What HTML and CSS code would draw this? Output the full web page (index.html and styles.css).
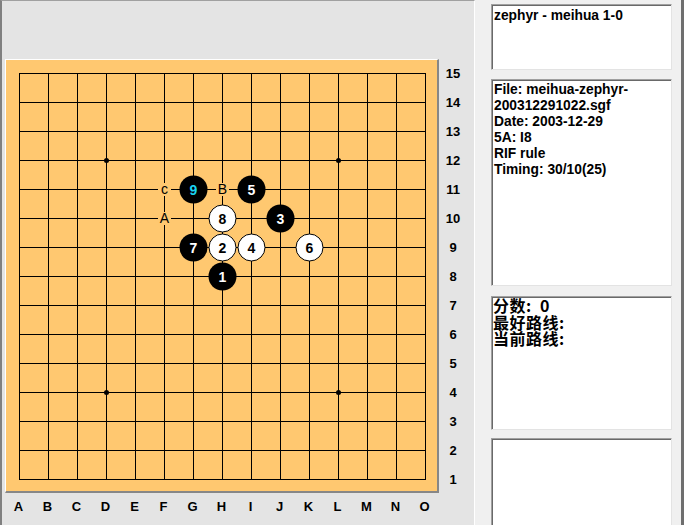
FILE: index.html
```html
<!DOCTYPE html>
<html>
<head>
<meta charset="utf-8">
<link rel="stylesheet" href="styles.css">
</head>
<body>
<div class="app">
  <div class="left">
    <div class="board-area">
      <div class="board">
        <svg class="grid" width="431" height="431" viewBox="0 0 431 431">
          <path class="lines" d="M13.5 13V420M42.5 13V420M71.5 13V420M100.5 13V420M129.5 13V420M158.5 13V420M187.5 13V420M216.5 13V420M245.5 13V420M274.5 13V420M303.5 13V420M332.5 13V420M361.5 13V420M390.5 13V420M419.5 13V420M13 13.5H420M13 42.5H420M13 71.5H420M13 100.5H420M13 129.5H420M13 158.5H420M13 187.5H420M13 216.5H420M13 245.5H420M13 274.5H420M13 303.5H420M13 332.5H420M13 361.5H420M13 390.5H420M13 419.5H420"/>
          <circle class="star" cx="100.5" cy="100.5" r="2.5"/>
          <circle class="star" cx="332.5" cy="100.5" r="2.5"/>
          <circle class="star" cx="100.5" cy="332.5" r="2.5"/>
          <circle class="star" cx="332.5" cy="332.5" r="2.5"/>

          <rect class="mark-bg" x="152" y="123" width="13" height="13"/>
          <text class="mark" x="158.5" y="134">c</text>
          <rect class="mark-bg" x="210" y="123" width="13" height="13"/>
          <text class="mark" x="216.5" y="134">B</text>
          <rect class="mark-bg" x="152" y="152" width="13" height="13"/>
          <text class="mark" x="158.5" y="163">A</text>

          <circle class="black" cx="216.5" cy="216.5" r="14"/>
          <text class="num num-w" x="216.5" y="221.5">1</text>
          <circle class="white" cx="216.5" cy="187.5" r="13.5"/>
          <text class="num num-b" x="216.5" y="192.5">2</text>
          <circle class="black" cx="274.5" cy="158.5" r="14"/>
          <text class="num num-w" x="274.5" y="163.5">3</text>
          <circle class="white" cx="245.5" cy="187.5" r="13.5"/>
          <text class="num num-b" x="245.5" y="192.5">4</text>
          <circle class="black" cx="245.5" cy="129.5" r="14"/>
          <text class="num num-w" x="245.5" y="134.5">5</text>
          <circle class="white" cx="303.5" cy="187.5" r="13.5"/>
          <text class="num num-b" x="303.5" y="192.5">6</text>
          <circle class="black" cx="187.5" cy="187.5" r="14"/>
          <text class="num num-w" x="187.5" y="192.5">7</text>
          <circle class="white" cx="216.5" cy="158.5" r="13.5"/>
          <text class="num num-b" x="216.5" y="163.5">8</text>
          <circle class="black" cx="187.5" cy="129.5" r="14"/>
          <text class="num num-last" x="187.5" y="134.5">9</text>
        </svg>
      </div>
      <div class="rows">
        <span>15</span><span>14</span><span>13</span><span>12</span><span>11</span><span>10</span><span>9</span><span>8</span><span>7</span><span>6</span><span>5</span><span>4</span><span>3</span><span>2</span><span>1</span>
      </div>
      <div class="cols">
        <span>A</span><span>B</span><span>C</span><span>D</span><span>E</span><span>F</span><span>G</span><span>H</span><span>I</span><span>J</span><span>K</span><span>L</span><span>M</span><span>N</span><span>O</span>
      </div>
    </div>
  </div>
  <div class="right">
    <div class="box box-title">zephyr - meihua 1-0</div>
    <div class="box box-info">File: meihua-zephyr-<br>200312291022.sgf<br>Date: 2003-12-29<br>5A: I8<br>RIF rule<br>Timing: 30/10(25)</div>
    <div class="box box-cn"><div class="cn-line">分数:  0</div><div class="cn-line">最好路线:</div><div class="cn-line">当前路线:</div></div>
    <div class="box box-empty"></div>
  </div>
</div>
</body>
</html>
```

FILE: styles.css
```css
html, body {
  margin: 0;
  padding: 0;
  width: 684px;
  height: 525px;
  overflow: hidden;
}
body {
  font-family: "Liberation Sans", Arial, sans-serif;
  background: #f0f0f0;
}
.app {
  display: flex;
  width: 684px;
  height: 525px;
}
.left {
  box-sizing: border-box;
  width: 475px;
  height: 525px;
  flex: none;
  background: #e4e4e4;
  border-left: 2px solid #808080;
  border-top: 1px solid #a0a0a0;
  border-right: 1px solid #ffffff;
  padding: 58px 0 0 3px;
}
.board-area {
  display: grid;
  grid-template-columns: 434px 28px;
  grid-template-rows: 434px 28px;
}
.board {
  box-sizing: border-box;
  width: 434px;
  height: 434px;
  background: #ffc870;
  border-top: 1px solid #ffffff;
  border-left: 1px solid #ffffff;
  border-right: 2px solid #878787;
  border-bottom: 2px solid #878787;
}
.grid {
  display: block;
}
.lines {
  stroke: #000;
  stroke-width: 1;
  fill: none;
  shape-rendering: crispEdges;
}
.star {
  fill: #000;
}
.mark-bg {
  fill: #ffc870;
}
.mark {
  font-family: "Liberation Sans", Arial, sans-serif;
  font-size: 14px;
  text-anchor: middle;
  fill: #000;
}
.black {
  fill: #000;
}
.white {
  fill: #fff;
  stroke: #000;
  stroke-width: 1;
}
.num {
  font-family: "Liberation Sans", Arial, sans-serif;
  font-weight: bold;
  font-size: 14px;
  text-anchor: middle;
}
.num-w { fill: #fff; }
.num-b { fill: #000; }
.num-last { fill: #1ad4f2; }

.rows {
  display: flex;
  flex-direction: column;
  font-weight: bold;
  font-size: 13px;
}
.rows span {
  height: 29px;
  line-height: 29px;
  text-align: center;
}
.cols {
  display: flex;
  margin-left: -1px;
  font-weight: bold;
  font-size: 13px;
}
.cols span {
  width: 29px;
  line-height: 28px;
  text-align: center;
  flex: none;
}

.right {
  flex: 1;
  display: flex;
  flex-direction: column;
  background: #f0f0f0;
  border-right: 3px solid #6e6e6e;
  padding: 4px 0 0 16px;
}
.box {
  box-sizing: border-box;
  width: 181px;
  flex: none;
  background: #ffffff;
  border-top: 1px solid #a0a0a0;
  border-left: 1px solid #a0a0a0;
  border-right: 1px solid #e3e3e3;
  border-bottom: 1px solid #e3e3e3;
  box-shadow: inset 1px 1px 0 #696969;
  font-weight: bold;
  font-size: 13.8px;
  line-height: 16px;
  padding: 3px 2px 0 2px;
  color: #000;
}
.box-title {
  height: 66px;
  margin-bottom: 9px;
}
.box-info {
  height: 207px;
  margin-bottom: 10px;
  padding-top: 2px;
}
.box-cn {
  height: 134px;
  margin-bottom: 8px;
  padding: 0 0 0 1px;
  font-family: "Noto Sans CJK SC", sans-serif;
  font-weight: bold;
  font-size: 16px;
  line-height: 16.5px;
  letter-spacing: 0.5px;
}
.cn-line {
  white-space: pre;
}
.box-empty {
  height: 87px;
  border-bottom: none;
}
```
